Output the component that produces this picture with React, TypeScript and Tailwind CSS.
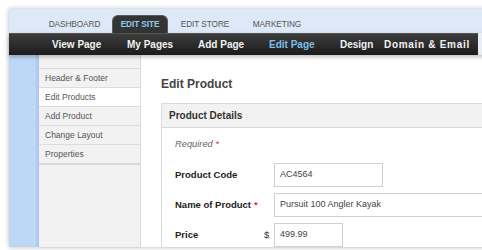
import type { ReactNode } from "react";

// top tabs: width of each slot fixes where the next one starts
const tabs = [
  { label: "DASHBOARD", width: "w-[71px]" },
  { label: "EDIT SITE", width: "w-[56px]", active: true },
  { label: "EDIT STORE", width: "w-[70px]" },
  { label: "MARKETING", width: "w-[70px]" },
];

const navItems = [
  { label: "View Page", width: "w-[75px]" },
  { label: "My Pages", width: "w-[71px]" },
  { label: "Add Page", width: "w-[71px]" },
  { label: "Edit Page", width: "w-[71px]", active: true },
  { label: "Design", width: "w-[44px]" },
  { label: "Domain & Email", width: "w-[100px] tracking-[0.7px]" },
];

const sideItems = ["Header & Footer", "Edit Products", "Add Product", "Change Layout", "Properties"];

function Field({ label, required, prefix, children }: { label: string; required?: boolean; prefix?: string; children: ReactNode }) {
  return (
    <div className="flex items-center h-[24px]">
      <div className="w-[89px] shrink-0 text-[9.5px] font-bold text-[#222]">
        {label}
        {required && <span className="text-[#e03030] ml-[3px]">*</span>}
      </div>
      <div className="w-[10px] shrink-0 text-[9.5px] text-[#333]">{prefix}</div>
      {children}
    </div>
  );
}

function TextInput({ value, width }: { value: string; width: string }) {
  return (
    <div className={`${width} shrink-0 h-full border border-[#cfcfcf] bg-white flex items-center pl-[5px] text-[9px] text-[#444]`}>
      {value}
    </div>
  );
}

export default function App() {
  return (
    <div className="w-[482px] h-[250px] bg-white overflow-hidden font-['Liberation_Sans',Arial,sans-serif]">
      <div className="ml-[9px] mt-[9px] w-[490px] h-[238px] flex flex-col bg-white shadow-[0_0_5px_rgba(0,0,0,0.28)]">
        {/* tab strip */}
        <div className="h-[24px] bg-[#dde9f8] flex items-end pl-[30px] gap-[2px]">
          {tabs.map((t) => (
            <div
              key={t.label}
              className={`${t.width} h-[18px] flex items-center justify-center text-[8.3px] tracking-[-0.1px] ${
                t.active
                  ? "bg-[#343434] text-[#8ccaf5] rounded-t-[6px] border-t border-x border-[#5a5a5a] font-bold"
                  : "text-[#555]"
              }`}
            >
              {t.label}
            </div>
          ))}
        </div>

        {/* main nav bar */}
        <div className="relative z-10 h-[22px] flex bg-[#e9eef4] shadow-[0_2px_4px_rgba(0,0,0,0.25)]">
          <div className="w-[469px] flex items-center pl-[43px] bg-gradient-to-b from-[#3d3d3d] to-[#1c1c1c] border-t border-[#555]">
            {navItems.map((n) => (
              <div
                key={n.label}
                className={`${n.width} shrink-0 text-[10px] font-bold whitespace-nowrap ${n.active ? "text-[#7cbde9]" : "text-[#f2f2f2]"}`}
              >
                {n.label}
              </div>
            ))}
          </div>
        </div>

        {/* body */}
        <div className="flex flex-1 min-h-0">
          <div className="w-[30px] shrink-0 bg-[#bdd7f7] border-r-[3px] border-[#aecaf0]" />

          <div className="w-[102px] shrink-0 bg-[#f2f2f2] border-r border-[#dcdcdc] shadow-[1px_0_2px_rgba(0,0,0,0.08)] flex flex-col">
            <div className="h-[14px] border-b border-[#dcdcdc]" />
            {sideItems.map((s) => (
              <div
                key={s}
                className={`h-[19px] flex items-center pl-[6px] border-b border-[#dcdcdc] text-[8.5px] text-[#555] ${
                  s === "Edit Products" ? "bg-white" : ""
                }`}
              >
                {s}
              </div>
            ))}
            <div className="border-t border-[#d8d8d8]" />
          </div>

          <div className="flex-1 min-w-0 bg-white pl-[20px] pt-[22px]">
            <div className="text-[12px] font-bold text-[#444] leading-[14px]">Edit Product</div>
            <div className="mt-[12px] w-[340px] border border-[#dadada]">
              <div className="h-[24px] bg-[#f2f2f2] border-b border-[#dadada] flex items-center pl-[7px] text-[10px] font-bold text-[#333]">
                Product Details
              </div>
              <div className="pl-[13px] pt-[10px] flex flex-col">
                <div className="text-[9.3px] italic text-[#666] leading-[12px]">
                  Required<span className="not-italic text-[#e03030] ml-[3px]">*</span>
                </div>
                <div className="mt-[13px] flex flex-col gap-[6px]">
                  <Field label="Product Code">
                    <TextInput value="AC4564" width="w-[109px]" />
                  </Field>
                  <Field label="Name of Product" required>
                    <TextInput value="Pursuit 100 Angler Kayak" width="w-[230px]" />
                  </Field>
                  <Field label="Price" prefix="$">
                    <TextInput value="499.99" width="w-[69px]" />
                  </Field>
                </div>
              </div>
            </div>
          </div>
        </div>
      </div>
    </div>
  );
}
